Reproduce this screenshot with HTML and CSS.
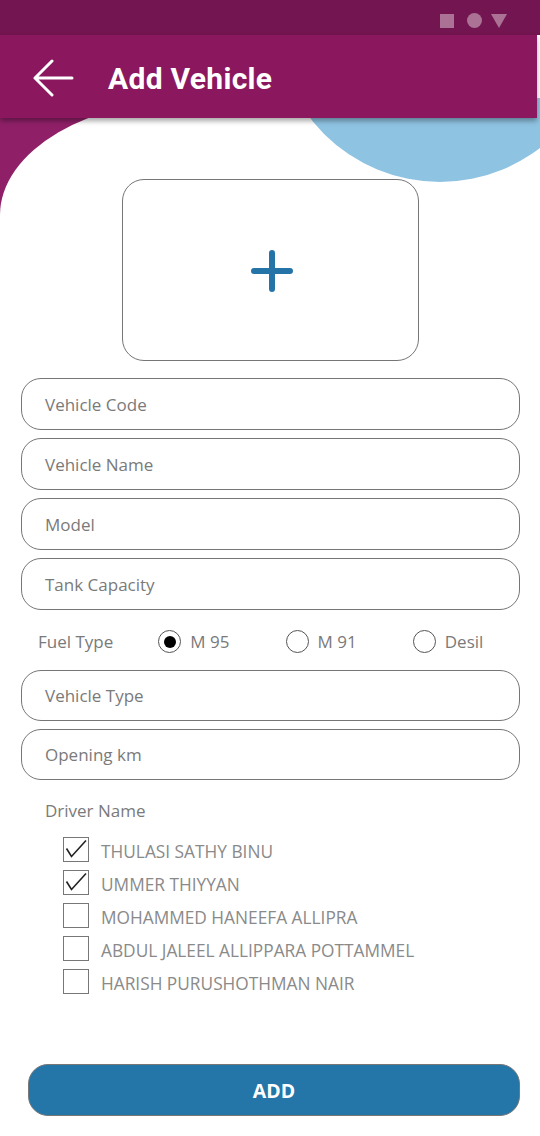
FILE: index.html
```html
<!DOCTYPE html>
<html>
<head>
<meta charset="utf-8">
<link rel="stylesheet" href="styles.css">
</head>
<body>
<div class="screen">
  <div class="status">
    <span class="st-square"></span>
    <span class="st-circle"></span>
    <svg class="st-tri" width="16" height="14" viewBox="0 0 16 14"><polygon points="0,0 16,0 8,14" fill="rgba(255,255,255,0.4)"/></svg>
  </div>
  <header class="appbar">
    <svg class="back" width="44" height="40" viewBox="0 0 44 40">
      <path d="M41 19 H4 M21 2 L4 19 L21 36" fill="none" stroke="#fff" stroke-width="3" stroke-linecap="round" stroke-linejoin="round"/>
    </svg>
    <h1 class="title">Add Vehicle</h1>
  </header>
  <main class="backdrop">
    <div class="panel">
      <div class="blob"></div>
      <div class="photo">
        <svg width="42" height="42" viewBox="0 0 42 42">
          <path d="M21 3 V39 M3 21 H39" stroke="#2574a8" stroke-width="6" stroke-linecap="round"/>
        </svg>
      </div>
      <div class="fields">
        <div class="field">Vehicle Code</div>
        <div class="field">Vehicle Name</div>
        <div class="field">Model</div>
        <div class="field">Tank Capacity</div>
      </div>
      <div class="fuel">
        <span class="fuel-label">Fuel Type</span>
        <span class="opt"><span class="radio on"></span>M 95</span>
        <span class="opt"><span class="radio"></span>M 91</span>
        <span class="opt"><span class="radio"></span>Desil</span>
      </div>
      <div class="fields second">
        <div class="field">Vehicle Type</div>
        <div class="field">Opening km</div>
      </div>
      <div class="drivers-label">Driver Name</div>
      <ul class="drivers">
        <li><span class="cb checked"><svg width="26" height="25" viewBox="0 0 26 25"><path d="M3.5 11.5 L8.5 19.5 L23 3.5" fill="none" stroke="#222" stroke-width="1.6"/></svg></span><span class="name">THULASI SATHY BINU</span></li>
        <li><span class="cb checked"><svg width="26" height="25" viewBox="0 0 26 25"><path d="M3.5 11.5 L8.5 19.5 L23 3.5" fill="none" stroke="#222" stroke-width="1.6"/></svg></span><span class="name">UMMER THIYYAN</span></li>
        <li><span class="cb"></span><span class="name">MOHAMMED HANEEFA ALLIPRA</span></li>
        <li><span class="cb"></span><span class="name">ABDUL JALEEL ALLIPPARA POTTAMMEL</span></li>
        <li><span class="cb"></span><span class="name">HARISH PURUSHOTHMAN NAIR</span></li>
      </ul>
      <button class="add">ADD</button>
    </div>
  </main>
</div>
</body>
</html>
```
FILE: styles.css
```css
* { box-sizing: border-box; }
html, body { margin: 0; padding: 0; }
body {
  width: 540px;
  height: 1136px;
  overflow: hidden;
  background: #fff;
  font-family: "Open Sans", "Noto Sans", sans-serif;
}
.screen { width: 540px; height: 1136px; display: flex; flex-direction: column; }
.status {
  height: 35px;
  background: #731550;
  display: flex;
  align-items: center;
  justify-content: flex-end;
  gap: 13px;
  padding-right: 33px;
  padding-top: 6px;
  position: relative;
  z-index: 3;
}
.st-square { width: 14px; height: 14px; background: rgba(255,255,255,0.4); }
.st-circle { width: 15px; height: 15px; border-radius: 50%; background: rgba(255,255,255,0.4); }
.st-tri { display: block; margin-left: -4px; }
.appbar {
  height: 83px;
  width: 537px;
  background: #8b185e;
  display: flex;
  align-items: center;
  padding-left: 31px;
  position: relative;
  z-index: 3;
  box-shadow: 0 3px 5px rgba(0,0,0,0.35);
}
.back { display: block; margin-top: 4px; }
.title {
  margin: 4px 0 0 33px;
  color: #fff;
  font-family: Roboto, "Liberation Sans", sans-serif;
  font-weight: 700;
  font-size: 30px;
  letter-spacing: 0.3px;
}
.backdrop { flex: 1; background: #8f2068; }
.panel {
  margin-top: -20px;
  height: calc(100% + 20px);
  background: #fff;
  border-top-left-radius: 200px 117px;
  position: relative;
  overflow: hidden;
  padding-top: 81px;
}
.blob {
  position: absolute;
  width: 328px;
  height: 328px;
  border-radius: 50%;
  background: #8fc3e2;
  left: 276px;
  top: -244px;
}
.photo {
  width: 297px;
  height: 182px;
  margin: 0 auto;
  border: 1.5px solid #767676;
  border-radius: 22px;
  display: flex;
  align-items: center;
  justify-content: center;
  position: relative;
}
.photo svg { display: block; margin-left: 3px; margin-top: 2px; }
.fields {
  display: flex;
  flex-direction: column;
  gap: 8px;
  margin: 17px 20px 0 21px;
}
.fields.second { margin-top: 0; }
.field {
  height: 52px;
  border: 1.5px solid #767676;
  border-radius: 20px;
  display: flex;
  align-items: center;
  padding-left: 23px;
  color: #7a7a7a;
  font-size: 17px;
}
.fields.second .field { height: 51px; }
.fuel {
  height: 60px;
  display: flex;
  align-items: center;
  padding-left: 38px;
  color: #7a7a7a;
  font-size: 17px;
  padding-top: 3px;
}
.fuel-label { width: 121px; }
.opt { width: 128px; display: flex; align-items: center; gap: 9px; }
.radio {
  width: 23px;
  height: 23px;
  border: 1.5px solid #555;
  border-radius: 50%;
  display: flex;
  align-items: center;
  justify-content: center;
}
.radio.on::after {
  content: "";
  width: 12px;
  height: 12px;
  border-radius: 50%;
  background: #000;
}
.drivers-label {
  margin: 19px 0 0 45px;
  line-height: 24px;
  color: #7a7a7a;
  font-size: 17px;
}
.drivers {
  list-style: none;
  margin: 14px 0 0 63px;
  padding: 0;
  display: flex;
  flex-direction: column;
  gap: 8px;
}
.drivers li {
  display: flex;
  align-items: center;
  gap: 12px;
  height: 25px;
  color: #8a8a8a;
  font-size: 17.3px;
}
.name { padding-top: 4px; }
.cb {
  width: 26px;
  height: 25px;
  border: 1.5px solid #777;
  display: flex;
  align-items: center;
  justify-content: center;
  position: relative;
  flex: none;
}
.cb svg { position: absolute; left: -1.5px; top: -1.5px; }
.add {
  display: block;
  margin: 70px 20px 0 28px;
  width: 492px;
  height: 52px;
  border: 1px solid #777;
  border-radius: 20px;
  background: #2475a8;
  color: #fff;
  font-family: "Open Sans", "Noto Sans", sans-serif;
  font-weight: 700;
  font-size: 19.5px;
  padding: 0;
}
```
